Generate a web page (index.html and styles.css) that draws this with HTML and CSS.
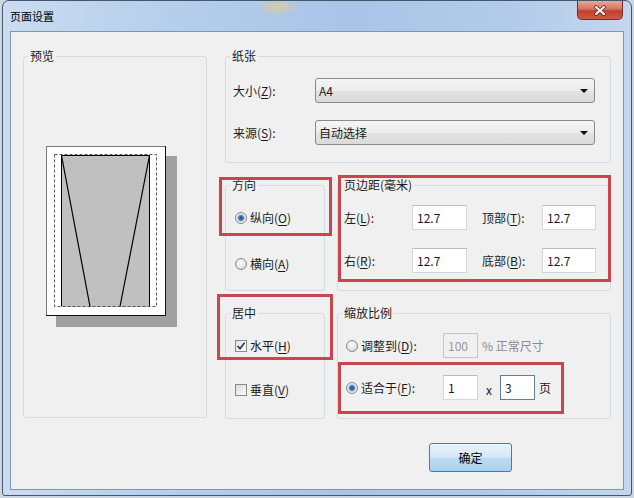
FILE: index.html
```html
<!DOCTYPE html>
<html lang="zh-CN">

<head>
  <meta charset="UTF-8">
  <meta name="viewport" content="width=device-width, initial-scale=1.0">
  <title>页面设置</title>
  <link rel="stylesheet" href="styles.css">
</head>

<body>
  <div class="window">
    <div class="titlebar">
      <span class="title">页面设置</span>
      <button class="close">
        <svg width="14" height="11" viewBox="0 0 14 11">
          <path d="M3 2 L11 9 M11 2 L3 9" stroke="#6b2a24" stroke-width="3.6" stroke-linecap="round" />
          <path d="M3 2 L11 9 M11 2 L3 9" stroke="#fff" stroke-width="2" stroke-linecap="round" />
        </svg>
      </button>
    </div>

    <div class="client">
      <div class="content">
        <!-- 预览 -->
        <fieldset class="group preview">
          <legend>预览</legend>
          <svg class="sheet" width="131" height="181" viewBox="0 0 131 181">
            <rect x="10" y="10" width="121" height="171" fill="#a0a0a0" />
            <rect x="0.5" y="0.5" width="119" height="169" fill="#fff" stroke="#7a7a7a" />
            <path d="M119.5 0 V170 M0 169.5 H120" stroke="#111" />
            <rect x="15" y="9" width="89" height="152" fill="#c0c0c0" />
            <rect x="8.5" y="8.5" width="102" height="152" fill="none" stroke="#555" stroke-dasharray="3 2" />
            <path d="M15.5 9.5 H103.5 M15.5 9.5 V160 M103.5 9.5 V160" stroke="#000" fill="none" />
            <path d="M15.5 9.5 L44 160.5 M103.5 9.5 L74 160.5" stroke="#000" stroke-width="1.2" />
          </svg>
        </fieldset>

        <div class="settings">
          <!-- 纸张 -->
          <fieldset class="group paper">
            <legend>纸张</legend>
            <div class="rows">
              <div class="row">
                <span class="label">大小(<u>Z</u>):</span>
                <div class="combo"><span>A4</span><i class="arrow"></i></div>
              </div>
              <div class="row">
                <span class="label">来源(<u>S</u>):</span>
                <div class="combo"><span>自动选择</span><i class="arrow"></i></div>
              </div>
            </div>
          </fieldset>

          <!-- 方向 -->
          <fieldset class="group orient">
            <legend>方向</legend>
            <div class="rows">
              <div class="row"><i class="radio on"></i><span>纵向(<u>O</u>)</span></div>
              <div class="row"><i class="radio"></i><span>横向(<u>A</u>)</span></div>
            </div>
          </fieldset>

          <!-- 页边距 -->
          <fieldset class="group margins">
            <legend>页边距(毫米)</legend>
            <div class="rows">
              <div class="row">
                <span class="label">左(<u>L</u>):</span>
                <input class="box" value="12.7">
                <span class="label label-2">顶部(<u>T</u>):</span>
                <input class="box box-2" value="12.7">
              </div>
              <div class="row">
                <span class="label">右(<u>R</u>):</span>
                <input class="box" value="12.7">
                <span class="label label-2">底部(<u>B</u>):</span>
                <input class="box box-2" value="12.7">
              </div>
            </div>
          </fieldset>

          <!-- 居中 -->
          <fieldset class="group center">
            <legend>居中</legend>
            <div class="rows">
              <div class="row">
                <i class="check on">
                  <svg width="10" height="10" viewBox="0 0 10 10"><path d="M1.5 5 L4 7.6 L8.6 1.8" fill="none" stroke="#2c3e5e" stroke-width="1.7" /></svg>
                </i>
                <span>水平(<u>H</u>)</span>
              </div>
              <div class="row"><i class="check"></i><span>垂直(<u>V</u>)</span></div>
            </div>
          </fieldset>

          <!-- 缩放比例 -->
          <fieldset class="group scale">
            <legend>缩放比例</legend>
            <div class="rows">
              <div class="row">
                <span class="opt"><i class="radio"></i><span>调整到(<u>D</u>):</span></span>
                <input class="box small" value="100" disabled>
                <span class="muted">% 正常尺寸</span>
              </div>
              <div class="row">
                <span class="opt"><i class="radio on"></i><span>适合于(<u>F</u>):</span></span>
                <input class="box small" value="1">
                <span class="times">x</span>
                <input class="box small focus" value="3">
                <span class="unit">页</span>
              </div>
            </div>
          </fieldset>
        </div>
      </div>

      <div class="actions">
        <button class="btn">确定</button>
      </div>
    </div>
  </div>

  <!-- 红框标注 -->
  <div class="mark mark-orient"></div>
  <div class="mark mark-margins"></div>
  <div class="mark mark-center"></div>
  <div class="mark mark-scale"></div>
</body>

</html>
```

FILE: styles.css
```css
body {
  position: relative;
  width: 634px;
  height: 498px;
  margin: 0;
  overflow: hidden;
  background: #cdd6e1;
  color: #1b1b1b;
  font: 12px "Noto Sans CJK SC", "Microsoft YaHei", sans-serif;
}

.window {
  box-sizing: border-box;
  display: flex;
  flex-direction: column;
  width: 630px;
  height: 496px;
  margin-left: 2px;
  border: 1px solid #46566b;
  border-radius: 7px 7px 3px 3px;
  background:
    radial-gradient(ellipse 22px 9px at 275px 6px, rgba(236, 206, 130, 0.7), transparent),
    linear-gradient(90deg, #cadcf0 0%, #b6cfec 25%, #a8c4e7 55%, #b2cbea 80%, #c3d7ee 100%);
}

/* 标题栏 */
.titlebar {
  display: flex;
  justify-content: space-between;
  height: 30px;
}

.titlebar .title {
  padding: 8px 0 0 7px;
  font-size: 11px;
  line-height: 14px;
  color: #000;
}

.titlebar .close {
  display: flex;
  align-items: center;
  justify-content: center;
  width: 46px;
  height: 19px;
  margin-right: 8px;
  padding: 0;
  border: 1px solid #6e2d28;
  border-top: none;
  border-radius: 0 0 5px 5px;
  background: linear-gradient(#e7a896 0%, #d47461 45%, #c1402c 55%, #cf5b45 100%);
}

/* 窗口内容区 */
.client {
  box-sizing: border-box;
  height: 459px;
  margin: 0 7px;
  padding: 17px 0 0 12px;
  border: 1px solid #8096ae;
  background: #f0f0f0;
}

.content {
  display: flex;
  gap: 18px;
}

.settings {
  display: grid;
  grid-template-columns: 100px 274px;
  grid-template-rows: 114px 113px 113px;
  column-gap: 12px;
  row-gap: 15px;
}

.group {
  box-sizing: border-box;
  min-width: 0;
  margin: 0;
  padding: 0;
  border: 1px solid #d5dbe0;
  border-radius: 3px;
}

.group legend {
  margin-left: 4px;
  padding: 0 2px;
  line-height: 14px;
}

.rows {
  display: flex;
  flex-direction: column;
}

.row {
  display: flex;
  align-items: center;
}

u {
  text-decoration-thickness: 1px;
  text-underline-offset: 2px;
}

/* 预览 */
.preview {
  width: 184px;
  height: 369px;
}

.preview .sheet {
  display: block;
  margin: 83px 0 0 22px;
}

/* 纸张 */
.paper {
  grid-column: 1 / 3;
}

.paper .rows {
  gap: 17px;
  padding: 15px 0 0 7px;
}

.paper .label {
  width: 82px;
}

.combo {
  box-sizing: border-box;
  display: flex;
  align-items: center;
  justify-content: space-between;
  width: 280px;
  height: 25px;
  padding: 0 6px 0 3px;
  border: 1px solid #8a8a8a;
  border-radius: 3px;
  background: linear-gradient(#f5f5f5 0%, #ececec 50%, #e2e2e2 51%, #dadada 100%);
}

.combo .arrow {
  width: 0;
  height: 0;
  border-top: 4px solid #111;
  border-left: 4px solid transparent;
  border-right: 4px solid transparent;
}

/* 单选框、复选框 */
.radio,
.check {
  box-sizing: border-box;
  flex: none;
  width: 12px;
  height: 12px;
  margin-right: 3px;
  border: 1px solid #8a8a8a;
}

.radio {
  border-radius: 50%;
  background: radial-gradient(circle at 45% 40%, #fdfdfd 0%, #e2e2e2 60%, #cbcbcb 100%);
}

.radio.on {
  background: radial-gradient(circle, #1f4c78 0, #3a73a8 2px, #9bc2e3 3.3px, #f1f1f1 4.2px, #d2d2d2 100%);
}

.check {
  display: flex;
  align-items: center;
  justify-content: center;
  background: linear-gradient(135deg, #dcdcdc, #fbfbfb);
}

.check.on {
  background: linear-gradient(135deg, #e4e4e4, #ffffff);
}

.orient .rows {
  gap: 29px;
  padding: 17px 0 0 9px;
}

.center .rows {
  gap: 27px;
  padding: 17px 0 0 9px;
}

/* 输入框 */
.box {
  box-sizing: border-box;
  width: 55px;
  height: 25px;
  margin: 0;
  padding: 0 4px;
  border: 1px solid #d4d8dd;
  border-top-color: #b8bcc2;
  outline: none;
  background: #fff;
  color: #1b1b1b;
  font: inherit;
}

.margins .rows {
  gap: 18px;
  padding: 13px 0 0 6px;
}

.margins .label {
  width: 68px;
}

.margins .label-2 {
  width: 60px;
  margin-left: 15px;
}

.margins .box-2 {
  width: 54px;
}

/* 缩放比例 */
.scale .rows {
  gap: 17px;
  padding: 13px 0 0 8px;
}

.scale .opt {
  display: flex;
  align-items: center;
  width: 97px;
}

.box.small {
  width: 35px;
}

.box:disabled {
  border-color: #c6c6c6;
  background: #f0f0f0;
  color: #9a9a9a;
}

.box.focus {
  border-color: #5f7e9c;
}

.muted {
  margin-left: 4px;
  color: #8c8c8c;
}

.times {
  width: 22px;
  padding-top: 3px;
  text-align: center;
}

.unit {
  margin-left: 4px;
}

/* 底部按钮 */
.actions {
  display: flex;
  padding: 24px 0 0 406px;
}

.btn {
  width: 83px;
  height: 29px;
  padding: 0;
  border: 1px solid #3c7fb1;
  border-radius: 3px;
  background: linear-gradient(#eaf4fb 0%, #d6e9f6 48%, #bcdcf1 52%, #a9d1ec 100%);
  color: #000;
  font: inherit;
}

/* 红框标注 */
.mark {
  position: absolute;
  box-sizing: border-box;
  border: 3px solid #c9464e;
}

.mark-orient {
  left: 219px;
  top: 177px;
  width: 113px;
  height: 59px;
}

.mark-margins {
  left: 338px;
  top: 175px;
  width: 273px;
  height: 107px;
}

.mark-center {
  left: 217px;
  top: 294px;
  width: 116px;
  height: 66px;
}

.mark-scale {
  left: 338px;
  top: 362px;
  width: 226px;
  height: 52px;
}
```
